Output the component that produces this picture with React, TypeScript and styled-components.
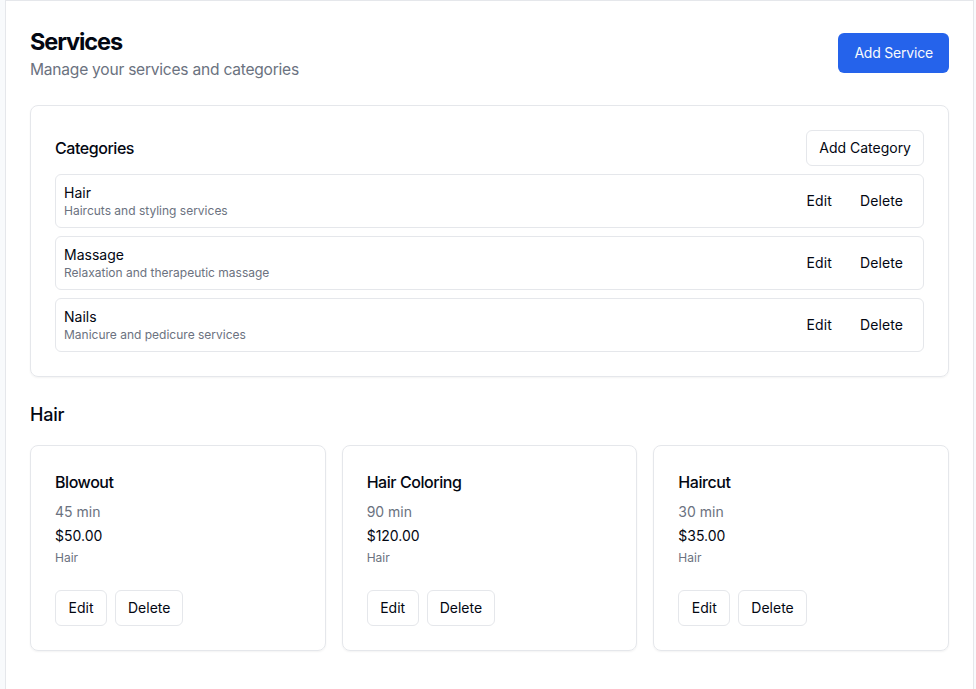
import styled, { createGlobalStyle } from "styled-components";

const categories = [
  { name: "Hair", description: "Haircuts and styling services" },
  { name: "Massage", description: "Relaxation and therapeutic massage" },
  { name: "Nails", description: "Manicure and pedicure services" },
];

const services = [
  { name: "Blowout", duration: "45 min", price: "$50.00", category: "Hair" },
  { name: "Hair Coloring", duration: "90 min", price: "$120.00", category: "Hair" },
  { name: "Haircut", duration: "30 min", price: "$35.00", category: "Hair" },
];

const App = () => {
  return (
    <>
      <GlobalStyle />
      <Shell>
        <Main>
          <PageHeader>
            <TitleBlock>
              <PageTitle>Services</PageTitle>
              <PageSubtitle>Manage your services and categories</PageSubtitle>
            </TitleBlock>
            <PrimaryButton>Add Service</PrimaryButton>
          </PageHeader>

          <Panel>
            <PanelHeader>
              <PanelTitle>Categories</PanelTitle>
              <OutlineButton>Add Category</OutlineButton>
            </PanelHeader>
            <CategoryList>
              {categories.map((category) => (
                <CategoryRow key={category.name}>
                  <div>
                    <CategoryName>{category.name}</CategoryName>
                    <CategoryDescription>{category.description}</CategoryDescription>
                  </div>
                  <RowActions>
                    <GhostButton>Edit</GhostButton>
                    <GhostButton>Delete</GhostButton>
                  </RowActions>
                </CategoryRow>
              ))}
            </CategoryList>
          </Panel>

          <SectionTitle>Hair</SectionTitle>
          <ServiceGrid>
            {services.map((service) => (
              <ServiceCard key={service.name}>
                <ServiceName>{service.name}</ServiceName>
                <ServiceDuration>{service.duration}</ServiceDuration>
                <ServicePrice>{service.price}</ServicePrice>
                <ServiceCategory>{service.category}</ServiceCategory>
                <CardActions>
                  <OutlineButton>Edit</OutlineButton>
                  <OutlineButton>Delete</OutlineButton>
                </CardActions>
              </ServiceCard>
            ))}
          </ServiceGrid>
        </Main>
      </Shell>
    </>
  );
};

export default App;

const GlobalStyle = createGlobalStyle`
  html, body {
    margin: 0;
    height: 100%;
    background: #f8fafc;
    font-family: Inter, "Liberation Sans", sans-serif;
    color: #030712;
    overflow: hidden;
  }
  * {
    box-sizing: border-box;
  }
`;

const Shell = styled.div`
  height: 689px;
  padding-left: 5px;
  padding-right: 2px;
`;

const Main = styled.main`
  height: 100%;
  background: #ffffff;
  border-top: 1px solid #e5e7eb;
  border-left: 1px solid #e5e7eb;
  border-right: 1px solid #e5e7eb;
  padding: 24px 24px 0;
`;

const PageHeader = styled.header`
  display: flex;
  justify-content: space-between;
  align-items: center;
  margin-bottom: 24px;
`;

const TitleBlock = styled.div`
  padding-top: 1px;
  margin-bottom: -1px;
`;

const PageTitle = styled.h1`
  margin: 0;
  font-size: 23.5px;
  line-height: 32px;
  font-weight: 700;
  letter-spacing: -1.1px;
`;

const PageSubtitle = styled.p`
  margin: 0;
  font-size: 15.6px;
  line-height: 24px;
  letter-spacing: -0.25px;
  color: #6b7280;
`;

const PrimaryButton = styled.button`
  height: 40px;
  padding: 0 16px 2px;
  border: none;
  border-radius: 6px;
  background: #2563eb;
  color: #f8fafc;
  font: 400 14px Inter, sans-serif;
  letter-spacing: -0.2px;
`;

const OutlineButton = styled.button`
  height: 36px;
  min-width: 52px;
  padding: 0 12px 2px;
  border: 1px solid #e5e7eb;
  border-radius: 6px;
  background: #ffffff;
  color: #030712;
  font: 400 14px Inter, sans-serif;
`;

const GhostButton = styled.button`
  height: 36px;
  padding: 0 12px 2px;
  border: none;
  background: transparent;
  color: #030712;
  font: 400 14px Inter, sans-serif;
  letter-spacing: 0.1px;
`;

const Panel = styled.section`
  border: 1px solid #e5e7eb;
  border-radius: 8px;
  padding: 24px;
  box-shadow: 0 1px 2px rgba(0, 0, 0, 0.05);
`;

const PanelHeader = styled.div`
  display: flex;
  justify-content: space-between;
  align-items: center;
  margin-bottom: 8px;
`;

const PanelTitle = styled.h2`
  margin: 0;
  font-size: 16px;
  font-weight: 500;
  letter-spacing: -0.45px;
`;

const CategoryList = styled.div`
  display: flex;
  flex-direction: column;
  gap: 8px;
`;

const CategoryRow = styled.div`
  height: 54px;
  display: flex;
  justify-content: space-between;
  align-items: center;
  padding: 0 8px;
  border: 1px solid #e5e7eb;
  border-radius: 6px;
`;

const CategoryName = styled.div`
  font-size: 14px;
  line-height: 20px;
  font-weight: 400;
`;

const CategoryDescription = styled.div`
  font-size: 12px;
  line-height: 16px;
  color: #6b7280;
`;

const RowActions = styled.div`
  display: flex;
  gap: 4px;
`;

const SectionTitle = styled.h2`
  margin: 24px 0 16px;
  font-size: 18px;
  line-height: 28px;
  font-weight: 500;
  letter-spacing: -0.2px;
`;

const ServiceGrid = styled.div`
  display: grid;
  grid-template-columns: repeat(3, 1fr);
  gap: 16px;
`;

const ServiceCard = styled.article`
  border: 1px solid #e5e7eb;
  border-radius: 8px;
  padding: 24px;
  box-shadow: 0 1px 2px rgba(0, 0, 0, 0.05);
`;

const ServiceName = styled.h3`
  margin: 0 0 8px;
  font-size: 16px;
  line-height: 24px;
  font-weight: 500;
  letter-spacing: -0.45px;
`;

const ServiceDuration = styled.div`
  font-size: 14px;
  line-height: 20px;
  color: #6b7280;
`;

const ServicePrice = styled.div`
  margin-top: 4px;
  font-size: 14px;
  line-height: 20px;
  font-weight: 400;
`;

const ServiceCategory = styled.div`
  margin-top: 4px;
  font-size: 12px;
  line-height: 16px;
  color: #6b7280;
`;

const CardActions = styled.div`
  display: flex;
  gap: 8px;
  margin-top: 24px;
`;
